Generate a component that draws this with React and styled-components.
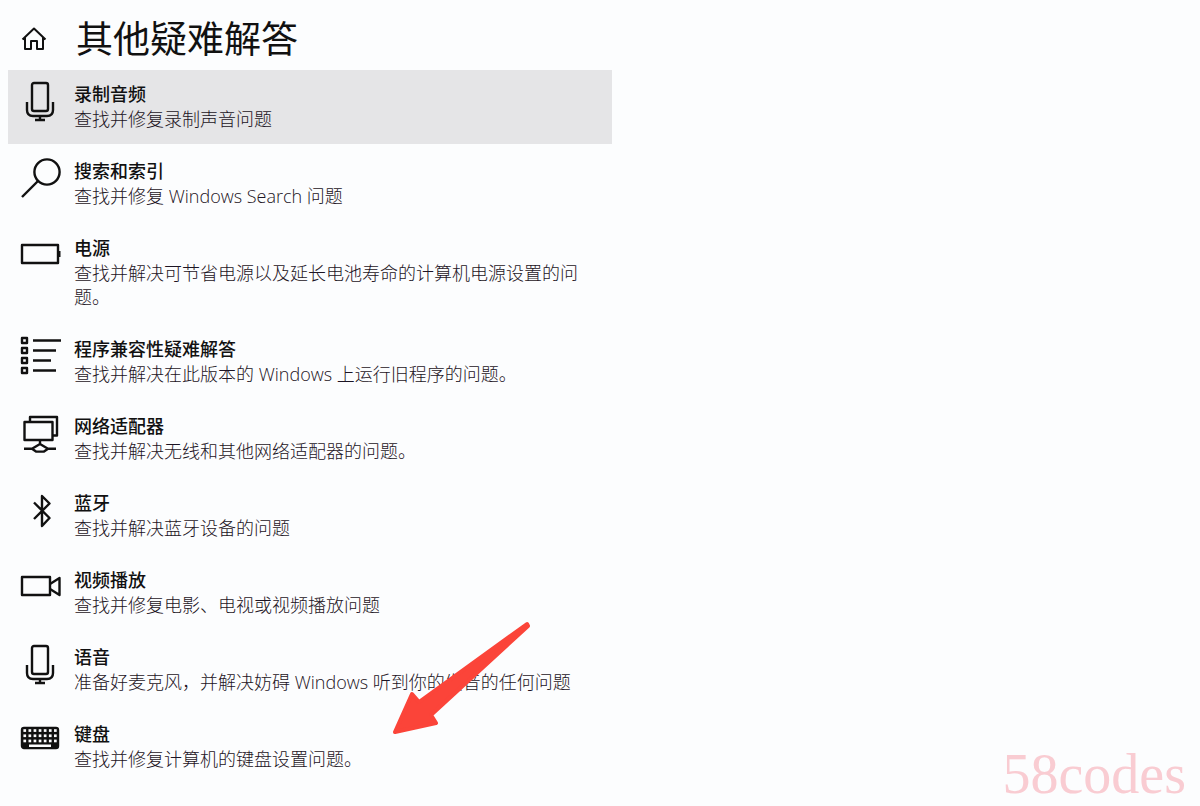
import styled, { createGlobalStyle } from 'styled-components'


const GlobalStyle = createGlobalStyle`
    * {
        box-sizing: border-box;
    }
    body {
        margin: 0;
        background-color: #fcfdfe;
        font-family: "Open Sans", "Noto Sans CJK SC", sans-serif;
        color: #111;
    }
`

const Container = styled.main`
    position: relative;
    min-height: 100vh;
    padding: 0 8px 20px;
`

//Header
const Header = styled.header`
    display: flex;
    align-items: center;
    height: 70px;
    padding: 8px 12px 0;
    gap: 28px;
`
const HomeButton = styled.button`
    display: flex;
    padding: 0;
    border: none;
    background: none;
    color: inherit;
    cursor: pointer;
`
const Title = styled.h1`
    margin: 0;
    font-size: 37px;
    font-weight: 400;
    line-height: 48px;
`

//List
const List = styled.ul`
    display: flex;
    flex-direction: column;
    gap: 3px;
    max-width: 604px;
    margin: 0;
    padding: 0;
    list-style: none;
`
const Item = styled.button`
    display: flex;
    align-items: flex-start;
    gap: 12px;
    width: 100%;
    padding: 11px 6px 13px 12px;
    border: none;
    background-color: ${props => props.$selected ? "#e5e5e7" : "transparent"};
    color: inherit;
    font-family: inherit;
    text-align: left;
    cursor: pointer;
`
const Icon = styled.svg`
    flex: none;
    fill: none;
    stroke: currentColor;
    stroke-width: ${props => props.$thin ? 2 : 2.4};
    stroke-linejoin: round;
`
const Text = styled.span`
    display: flex;
    flex-direction: column;
`
const Name = styled.span`
    font-size: 18px;
    font-weight: 500;
    line-height: 26px;
`
const Desc = styled.span`
    font-size: 18px;
    font-weight: 300;
    line-height: 24px;
    color: #1c1424;
`

//Overlays
const Arrow = styled.svg`
    position: absolute;
    top: 618px;
    left: 388px;
    fill: #fb4439;
    stroke: #fb4439;
    stroke-width: 4;
    stroke-linejoin: round;
    pointer-events: none;
`
const Watermark = styled.div`
    position: absolute;
    right: 14px;
    bottom: 0;
    font-family: "Liberation Serif", serif;
    font-size: 56px;
    line-height: 64px;
    color: #f9ccd2;
    pointer-events: none;
`

const keyRows = [7.2, 12.4, 17.6]
const keyCols = [3.4, 8.5, 13.6, 18.7, 23.8, 28.9, 34]

const icons = {
  mic: (
    <>
      <rect x="12" y="1" width="16" height="28" rx="2" />
      <path d="M7 20v8q0 6 6 6h14q6 0 6-6v-8M20 34v4M15 38h10" />
    </>
  ),
  search: (
    <>
      <circle cx="27" cy="13" r="12.6" />
      <path d="M18 22L2 38" />
    </>
  ),
  battery: (
    <>
      <rect x="2" y="9" width="36" height="18" />
      <path d="M39 15v6" strokeWidth="3" />
    </>
  ),
  list: (
    <>
      {[0, 10, 20, 30].map(y => <rect key={y} x="2" y={y + 1} width="5" height="5" />)}
      <path d="M13 3.5h28M13 13.5h23M13 23.5h18M13 33.5h23" />
    </>
  ),
  network: (
    <>
      <rect x="4.5" y="8" width="28" height="18" />
      <path d="M10 8V3h27v18.500h-4M20 26v4M4 34.800h8l8-4.800 8 4.800h8M12 34.800l4 2.800h8l4-2.800" />
    </>
  ),
  bluetooth: <path d="M14 11.500L29.500 27 22 35V5l7.500 7.500L14 28" />,
  video: (
    <>
      <rect x="2" y="9" width="28" height="18" />
      <path d="M30 16l9.500-6v17L30 21" />
    </>
  ),
  keyboard: (
    <>
      <rect x="2" y="6" width="36" height="20" rx="2" fill="currentColor" />
      {keyRows.map(y => keyCols.map(x => (
        <rect key={`${x}-${y}`} x={x} y={y} width="2.7" height="2.7" fill="#fcfdfe" stroke="none" />
      )))}
      <rect x="9" y="22.500" width="22" height="2.500" fill="#fcfdfe" stroke="none" />
    </>
  ),
}

const items = [
  { icon: "mic", name: "录制音频", desc: "查找并修复录制声音问题", selected: true },
  { icon: "search", name: "搜索和索引", desc: "查找并修复 Windows Search 问题" },
  { icon: "battery", name: "电源", desc: "查找并解决可节省电源以及延长电池寿命的计算机电源设置的问题。" },
  { icon: "list", name: "程序兼容性疑难解答", desc: "查找并解决在此版本的 Windows 上运行旧程序的问题。" },
  { icon: "network", name: "网络适配器", desc: "查找并解决无线和其他网络适配器的问题。" },
  { icon: "bluetooth", name: "蓝牙", desc: "查找并解决蓝牙设备的问题" },
  { icon: "video", name: "视频播放", desc: "查找并修复电影、电视或视频播放问题" },
  { icon: "mic", name: "语音", desc: "准备好麦克风，并解决妨碍 Windows 听到你的发音的任何问题" },
  { icon: "keyboard", name: "键盘", desc: "查找并修复计算机的键盘设置问题。" },
]


const App = () => {
  return (
    <Container lang="zh-CN">
        <GlobalStyle />
        <Header>
            <HomeButton aria-label="主页">
                <Icon $thin width="28" height="28" viewBox="0 0 28 28">
                    <path d="M2.500 14.500L14 3.500l11.500 11M5 12.500V24h6v-8h6v8h6V12.500" />
                </Icon>
            </HomeButton>
            <Title>其他疑难解答</Title>
        </Header>

        <List>
            {items.map(item => (
                <li key={item.name}>
                    <Item $selected={item.selected}>
                        <Icon width="42" height="42" viewBox="0 -1 42 42">
                            {icons[item.icon]}
                        </Icon>
                        <Text>
                            <Name>{item.name}</Name>
                            <Desc>{item.desc}</Desc>
                        </Text>
                    </Item>
                </li>
            ))}
        </List>

        <Arrow width="146" height="120" viewBox="0 0 146 120" aria-hidden="true">
            <path d="M7 114L24 76l7 8L139 6l1 2-97 89 5 8z" />
        </Arrow>
        <Watermark>58codes</Watermark>
    </Container>
  )
}

export default App
